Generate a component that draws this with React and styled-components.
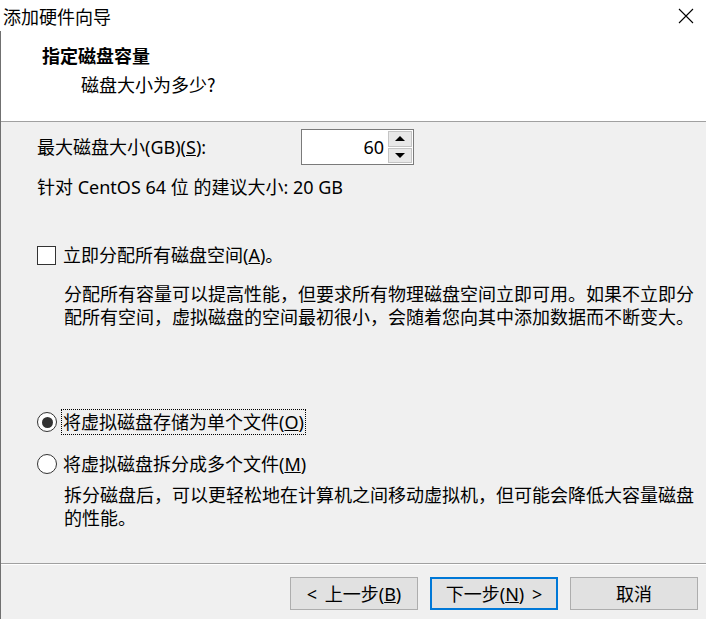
import styled, { createGlobalStyle, css } from "styled-components";

const GlobalStyle = createGlobalStyle`
  html, body {
    margin: 0;
    padding: 0;
    background: #ffffff;
  }
  body {
    font-family: "Noto Sans", "Noto Sans CJK SC", sans-serif;
    color: #000;
  }
`;

const Window = styled.div`
  width: 706px;
  height: 619px;
  display: flex;
  flex-direction: column;
  overflow: hidden;
  background: #ffffff;
`;

const TitleBar = styled.div`
  height: 31px;
  display: flex;
  align-items: center;
  justify-content: space-between;
  padding: 0 12px 0 3px;
  background: #ffffff;
`;

const TitleText = styled.span`
  font-family: "Noto Sans CJK SC", sans-serif;
  font-size: 18px;
  line-height: 24px;
`;

const Frame = styled.div`
  flex: 1;
  display: flex;
  flex-direction: column;
  border-left: 1px solid #707070;
`;

const Header = styled.div`
  height: 91px;
  box-sizing: border-box;
  padding: 12px 0 0 41px;
  background: #ffffff;
  border-bottom: 1px solid #a0a0a0;
  display: flex;
  flex-direction: column;
  gap: 5px;
`;

const HeaderTitle = styled.div`
  font-family: "Noto Sans CJK SC", serif;
  font-weight: 700;
  font-size: 18px;
  line-height: 24px;
`;

const HeaderSub = styled.div`
  font-family: "Noto Sans CJK SC", sans-serif;
  font-size: 18px;
  line-height: 24px;
  padding-left: 39px;
`;

const Body = styled.div`
  flex: 1;
  background: #f0f0f0;
  padding: 7px 0 0 36px;
  display: flex;
  flex-direction: column;
`;

const Row = styled.div`
  display: flex;
  align-items: center;
  ${(p) =>
    p.$mt &&
    css`
      margin-top: ${p.$mt}px;
    `}
`;

const Label = styled.span`
  font-size: 18px;
  line-height: 24px;
  white-space: nowrap;
  ${(p) =>
    p.$width &&
    css`
      width: ${p.$width}px;
    `}
`;

const SpinBox = styled.div`
  width: 113px;
  height: 36px;
  box-sizing: border-box;
  border: 1px solid #7a7a7a;
  background: #fff;
  display: flex;
`;

const SpinValue = styled.div`
  flex: 1;
  text-align: right;
  padding-right: 4px;
  font-size: 18px;
  line-height: 34px;
`;

const SpinButtons = styled.div`
  width: 24px;
  display: flex;
  flex-direction: column;
  gap: 1px;
  padding: 1px 1px 1px 0;
`;

const SpinButton = styled.div`
  flex: 1;
  background: #e8e8e8;
  border: 1px solid #c4c4c4;
  display: flex;
  align-items: center;
  justify-content: center;
`;

const Arrow = styled.div`
  width: 0;
  height: 0;
  border-left: 5px solid transparent;
  border-right: 5px solid transparent;
  ${(p) =>
    p.$down
      ? css`
          border-top: 5px solid #000;
        `
      : css`
          border-bottom: 5px solid #000;
        `}
`;

const CheckBox = styled.div`
  width: 19px;
  height: 19px;
  box-sizing: border-box;
  border: 1px solid #333;
  background: #fff;
  margin-right: 7px;
  flex-shrink: 0;
`;

const Radio = styled.div`
  width: 20px;
  height: 20px;
  box-sizing: border-box;
  border: 1px solid #333;
  border-radius: 50%;
  background: #fff;
  margin-right: 4px;
  display: flex;
  align-items: center;
  justify-content: center;
  flex-shrink: 0;
  &::after {
    content: "";
    width: 11px;
    height: 11px;
    border-radius: 50%;
    background: ${(p) => (p.$checked ? "#333" : "transparent")};
  }
`;

const RadioText = styled.span`
  font-size: 18px;
  line-height: 24px;
  padding: 0 1px;
  border: 1px dotted ${(p) => (p.$focused ? "#000" : "transparent")};
  white-space: nowrap;
`;

const Desc = styled.p`
  margin: ${(p) => p.$mt || 0}px 0 0 27px;
  font-family: "Noto Sans CJK SC", sans-serif;
  font-size: 18px;
  line-height: 23px;
  white-space: nowrap;
`;

const Footer = styled.div`
  height: 56px;
  box-sizing: border-box;
  background: #f0f0f0;
  border-top: 1px solid #a0a0a0;
  box-shadow: inset 0 1px 0 #ffffff;
  padding: 13px 8px 0 0;
  display: flex;
  justify-content: flex-end;
  gap: 12px;
`;

const Button = styled.div`
  width: 128px;
  height: 33px;
  box-sizing: border-box;
  background: #e1e1e1;
  border: 1px solid #adadad;
  display: flex;
  align-items: center;
  justify-content: center;
  font-size: 18px;
  line-height: 24px;
  word-spacing: 3px;
  ${(p) =>
    p.$default &&
    css`
      border: 2px solid #0078d7;
    `}
`;

const CloseIcon = () => (
  <svg width="16" height="16" viewBox="0 0 16 16">
    <path d="M1 1 L15 15 M15 1 L1 15" stroke="#000" strokeWidth="1.1" fill="none" />
  </svg>
);

export default function App() {
  return (
    <>
      <GlobalStyle />
      <Window>
        <TitleBar>
          <TitleText>添加硬件向导</TitleText>
          <CloseIcon />
        </TitleBar>
        <Frame>
          <Header>
            <HeaderTitle>指定磁盘容量</HeaderTitle>
            <HeaderSub>磁盘大小为多少?</HeaderSub>
          </Header>
          <Body>
            <Row>
              <Label $width={264}>
                最大磁盘大小(GB)(<u>S</u>):
              </Label>
              <SpinBox>
                <SpinValue>60</SpinValue>
                <SpinButtons>
                  <SpinButton>
                    <Arrow />
                  </SpinButton>
                  <SpinButton>
                    <Arrow $down />
                  </SpinButton>
                </SpinButtons>
              </SpinBox>
            </Row>
            <Row $mt={10}>
              <Label>针对 CentOS 64 位 的建议大小: 20 GB</Label>
            </Row>
            <Row $mt={44}>
              <CheckBox />
              <Label>
                立即分配所有磁盘空间(<u>A</u>)。
              </Label>
            </Row>
            <Desc $mt={15}>
              分配所有容量可以提高性能，但要求所有物理磁盘空间立即可用。如果不立即分
              <br />
              配所有空间，虚拟磁盘的空间最初很小，会随着您向其中添加数据而不断变大。
            </Desc>
            <Row $mt={81}>
              <Radio $checked />
              <RadioText $focused>
                将虚拟磁盘存储为单个文件(<u>O</u>)
              </RadioText>
            </Row>
            <Row $mt={16}>
              <Radio />
              <RadioText>
                将虚拟磁盘拆分成多个文件(<u>M</u>)
              </RadioText>
            </Row>
            <Desc $mt={6}>
              拆分磁盘后，可以更轻松地在计算机之间移动虚拟机，但可能会降低大容量磁盘
              <br />
              的性能。
            </Desc>
          </Body>
          <Footer>
            <Button>
              &lt; 上一步(<u>B</u>)
            </Button>
            <Button $default>
              下一步(<u>N</u>) &gt;
            </Button>
            <Button>取消</Button>
          </Footer>
        </Frame>
      </Window>
    </>
  );
}
